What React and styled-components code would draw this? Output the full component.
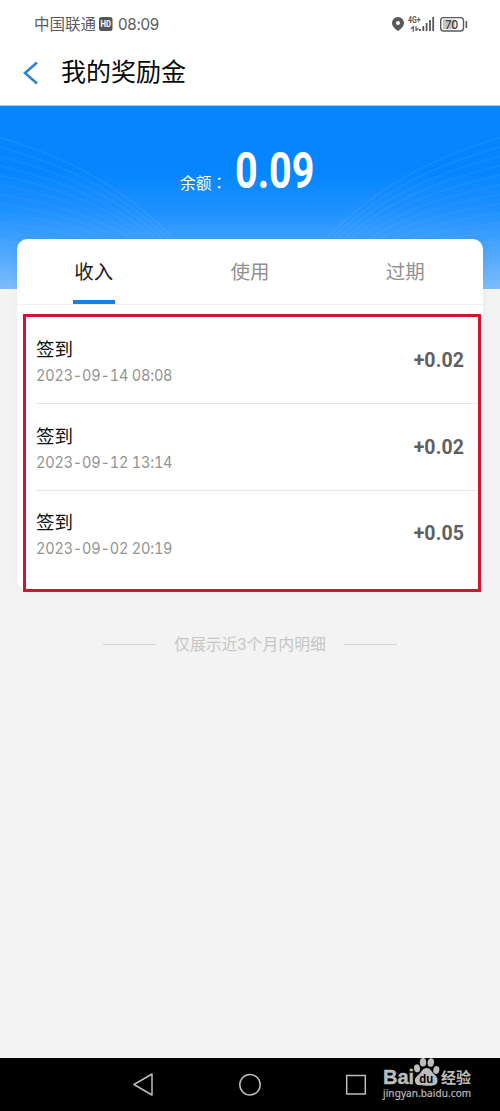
import React from 'react';
import styled, { createGlobalStyle } from 'styled-components';

const GlobalStyle = createGlobalStyle`
  * { box-sizing: border-box; }
  body {
    margin: 0;
    background: #f3f3f3;
    font-family: Roboto, "Noto Sans CJK SC", sans-serif;
  }
`;

const Screen = styled.div`
  width: 500px;
  height: 1111px;
  display: flex;
  flex-direction: column;
  overflow: hidden;
  background: #f3f3f3;
`;

const StatusBar = styled.div`
  height: 48px;
  flex: none;
  display: flex;
  align-items: center;
  justify-content: space-between;
  padding: 0 32px 0 34px;
  background: #fff;
  color: #5c5c5c;
`;

const StatusGroup = styled.div`
  display: flex;
  align-items: center;
`;

const Carrier = styled.span`
  padding-top: 2px;
  font-size: 15.5px;
  line-height: 20px;
`;

const HdIcon = styled.svg`
  margin-left: 3px;
`;

const Clock = styled.span`
  margin-left: 5px;
  font-family: Inter, sans-serif;
  font-size: 16px;
  line-height: 20px;
  letter-spacing: -0.3px;
  transform: scaleX(0.95);
  transform-origin: left;
`;

const NavBar = styled.header`
  height: 57px;
  flex: none;
  display: flex;
  align-items: center;
  padding: 0 0 8px 23px;
  background: #fff;
`;

const Title = styled.h1`
  margin: 0 0 0 22px;
  padding-top: 1px;
  font-size: 25px;
  line-height: 30px;
  font-weight: 400;
  color: #080808;
`;

const Hero = styled.section`
  position: relative;
  height: 184px;
  flex: none;
  border-top: 1px solid #9fd0fb;
  background: linear-gradient(#0586ff 0%, #0586ff 36%, #1f91ff 58%, #45a3fe 76%, #7cbcfb 100%);
`;

const HeroLines = styled.svg`
  position: absolute;
  left: 0;
  top: 0;
`;

const Balance = styled.div`
  position: relative;
  display: flex;
  align-items: baseline;
  padding: 37px 0 0 180px;
  color: #fff;
`;

const BalanceLabel = styled.span`
  position: relative;
  top: 1px;
  width: 55px;
  font-family: "Noto Sans CJK TC", sans-serif;
  font-size: 15.7px;
  line-height: 24px;
  white-space: nowrap;
`;

const BalanceValue = styled.span`
  font-size: 50px;
  line-height: 56px;
  font-weight: 700;
  transform: scaleX(0.79);
  transform-origin: left;
`;

const Card = styled.main`
  position: relative;
  height: 351px;
  flex: none;
  margin: -50px 17px 0;
  background: #fff;
  border-radius: 10px;
  box-shadow: 0 0 8px rgba(0, 0, 0, 0.05);
`;

const Tabs = styled.nav`
  display: flex;
  height: 66px;
  border-bottom: 1px solid #f1f1f3;
`;

const Tab = styled.div`
  position: relative;
  flex: 1;
  display: flex;
  flex-direction: column;
  align-items: center;
  justify-content: space-between;
  padding-top: 20px;
  font-size: 19.5px;
  line-height: 28px;
  color: ${(p) => (p.$active ? '#1c1c1c' : '#919191')};
  left: ${(p) => (p.$active ? '-1px' : '0')};

  &::after {
    content: '';
    width: 42px;
    height: 4px;
    background: ${(p) => (p.$active ? '#1c7fe3' : 'transparent')};
  }
`;

const Highlight = styled.div`
  height: 278px;
  margin: 9px 2px 0 6px;
  border: 3px solid #d6142e;
  padding-left: 10px;
`;

const Row = styled.div`
  height: ${(p) => p.$height}px;
  display: flex;
  align-items: flex-start;
  justify-content: space-between;
  padding-right: 14px;
  padding-top: ${(p) => p.$top}px;
  border-bottom: ${(p) => (p.$last ? 'none' : '1px solid #e7e7e7')};
`;

const RowTitle = styled.div`
  font-size: 18.5px;
  line-height: 27px;
  font-weight: 400;
  color: #101010;
`;

const RowDate = styled.div`
  margin-top: -2px;
  font-family: Inter, sans-serif;
  font-size: 16px;
  line-height: 26px;
  font-weight: 400;
  font-variant-numeric: tabular-nums;
  letter-spacing: -0.2px;
  color: #939393;
  white-space: nowrap;
  transform: scaleX(0.905);
  transform-origin: left;
`;

const Amount = styled.div`
  margin-top: 11px;
  font-size: 19.5px;
  line-height: 26px;
  font-weight: 700;
  letter-spacing: 0.1px;
  color: #606060;
`;

const Footnote = styled.footer`
  display: flex;
  align-items: center;
  justify-content: center;
  gap: 18px;
  margin-top: 40px;
  font-size: 15.9px;
  line-height: 26px;
  color: #c6c6c6;

  &::before,
  &::after {
    content: '';
    width: 53px;
    height: 1px;
    background: #d2d2d2;
  }
`;

const FootnoteText = styled.span`
  padding-top: 2px;
`;

const SystemBar = styled.div`
  flex: none;
  height: 53px;
  margin-top: auto;
  display: flex;
  align-items: center;
  padding-left: 132px;
  background: #000;
`;

const NavKeys = styled.svg`
  flex: none;
`;

const Watermark = styled.div`
  display: flex;
  flex-direction: column;
  margin-left: 15px;
  width: 96px;
  height: 53px;
  color: #bcbcbc;
`;

const Brand = styled.div`
  display: flex;
  height: 29px;
`;

const BrandLatin = styled.span`
  width: 31px;
  padding-top: 8px;
  font-family: "Liberation Sans", sans-serif;
  font-size: 20px;
  line-height: 23px;
  font-weight: 700;
  -webkit-text-stroke: 0.4px currentColor;
`;

const BrandHan = styled.span`
  padding: 8px 0 0 1px;
  font-size: 15px;
  line-height: 24px;
  font-weight: 700;
`;

const Domain = styled.span`
  font-family: "Noto Sans", sans-serif;
  font-size: 10px;
  line-height: 12px;
  letter-spacing: 0.1px;
  -webkit-text-stroke: 0.2px currentColor;
`;

const records = [
  { date: '2023-09-14 08:08', amount: '+0.02', height: 87, top: 20 },
  { date: '2023-09-12 13:14', amount: '+0.02', height: 87, top: 20 },
  { date: '2023-09-02 20:19', amount: '+0.05', height: 90, top: 19 },
];

const strands = Array.from({ length: 12 }, (_, i) => i);

function Strands() {
  return (
    <g fill="none" stroke="#fff" strokeWidth="1.200">
      {strands.map((i) => (
        <path
          key={i}
          opacity={0.075 - i * 0.003}
          d={`M-2 ${31 + i * 9.5} C60 ${49 + i * 8.2} 120 ${76 + i * 6.5} 178 ${137 + i * 5}`}
        />
      ))}
    </g>
  );
}

function StatusIcons() {
  return (
    <svg width="76" height="20" viewBox="392 14 76 20">
      <path
        fillRule="evenodd"
        fill="#595959"
        d="M398 17a6 6 0 0 0-6 6c0 3.400 3.300 5.800 6 8.200 2.700-2.400 6-4.800 6-8.200a6 6 0 0 0-6-6zm0 4a2 2 0 1 1 0 4 2 2 0 0 1 0-4z"
      />
      <text x="408" y="23.200" fontSize="8.500" fontWeight="700" fontFamily="Roboto, sans-serif" fill="#595959" textLength="12.500" lengthAdjust="spacingAndGlyphs">4G+</text>
      <path
        d="M410.800 28.700l2.500-2v5M416 26v5M416 30.500l2.500-2.300"
        fill="none"
        stroke="#595959"
        strokeWidth="1.200"
      />
      <path
        d="M419.800 31v-2M423.300 31v-5M426.600 31v-8M430 31v-11M433.200 31v-14"
        stroke="#595959"
        strokeWidth="1.800"
      />
      <rect x="440.700" y="17.600" width="22.800" height="13.400" rx="3" fill="none" stroke="#595959" strokeWidth="1.400" />
      <path d="M443 19.500h12v9.700h-12z" fill="#c5c5c5" />
      <text x="445.300" y="28.500" fontSize="11.800" fontWeight="500" fontFamily="Inter, sans-serif" fill="#404040" textLength="13" lengthAdjust="spacingAndGlyphs">70</text>
      <path d="M466.400 21v7" stroke="#595959" strokeWidth="1.600" />
    </svg>
  );
}

export default function App() {
  return (
    <Screen>
      <GlobalStyle />
      <StatusBar>
        <StatusGroup>
          <Carrier>中国联通</Carrier>
          <HdIcon width="14" height="14" viewBox="0 0 14 14">
            <rect width="13.500" height="14" rx="2.500" fill="#555" />
            <text x="1.500" y="10.200" fontSize="8.500" fontWeight="700" fontFamily="Roboto, sans-serif" fill="#fff" textLength="10.500" lengthAdjust="spacingAndGlyphs">HD</text>
          </HdIcon>
          <Clock>08:09</Clock>
        </StatusGroup>
        <StatusIcons />
      </StatusBar>
      <NavBar>
        <svg width="16" height="24" viewBox="0 0 16 24">
          <path d="M14 1.500L2 12 14 22.500" fill="none" stroke="#3087d0" strokeWidth="2.700" />
        </svg>
        <Title>我的奖励金</Title>
      </NavBar>
      <Hero>
        <HeroLines width="500" height="183" viewBox="0 0 500 183">
          <Strands />
          <g transform="translate(500 0) scale(-1 1)">
            <Strands />
          </g>
        </HeroLines>
        <Balance>
          <BalanceLabel>余额：</BalanceLabel>
          <BalanceValue>0.09</BalanceValue>
        </Balance>
      </Hero>
      <Card>
        <Tabs>
          <Tab $active>收入</Tab>
          <Tab>使用</Tab>
          <Tab>过期</Tab>
        </Tabs>
        <Highlight>
          {records.map((r, i) => (
            <Row key={r.date} $height={r.height} $top={r.top} $last={i === records.length - 1}>
              <div>
                <RowTitle>签到</RowTitle>
                <RowDate>{r.date}</RowDate>
              </div>
              <Amount>{r.amount}</Amount>
            </Row>
          ))}
        </Highlight>
      </Card>
      <Footnote>
        <FootnoteText>仅展示近3个月内明细</FootnoteText>
      </Footnote>
      <SystemBar>
        <NavKeys width="236" height="30" viewBox="132 1070 236 30">
          <g fill="none" stroke="#bdbdbd" strokeWidth="1.500" strokeLinejoin="round">
            <path d="M152 1074v21l-18-10.500z" />
            <circle cx="250" cy="1084.800" r="10.200" />
            <rect x="346.700" y="1075.500" width="18.600" height="18.600" />
          </g>
        </NavKeys>
        <Watermark>
          <Brand>
            <BrandLatin>Bai</BrandLatin>
            <svg width="26" height="29" viewBox="414 1058 26 29">
              <g fill="#bcbcbc">
                <ellipse cx="417" cy="1068.300" rx="3" ry="4" transform="rotate(-12 417 1068.300)" />
                <ellipse cx="423" cy="1062.300" rx="3.200" ry="4.300" />
                <ellipse cx="430.800" cy="1062.500" rx="3.200" ry="4.300" transform="rotate(12 430.800 1062.500)" />
                <ellipse cx="436.300" cy="1070" rx="3" ry="4" transform="rotate(15 436.300 1070)" />
                <path d="M426.500 1068c3.800 0 5 3.500 7 5.500s4.500 4 4 7.800c-.6 4-3.500 4.700-11 4.400s-10.500.2-11.500-3.900c-.8-3.500 2-5.800 4.300-7.800s3.400-6 7.200-6z" />
              </g>
              <text x="419.200" y="1083" fontSize="13.500" fontWeight="700" fontFamily="Liberation Sans, sans-serif" fill="#000" textLength="14" lengthAdjust="spacingAndGlyphs">du</text>
            </svg>
            <BrandHan>经验</BrandHan>
          </Brand>
          <Domain>jingyan.baidu.com</Domain>
        </Watermark>
      </SystemBar>
    </Screen>
  );
}
